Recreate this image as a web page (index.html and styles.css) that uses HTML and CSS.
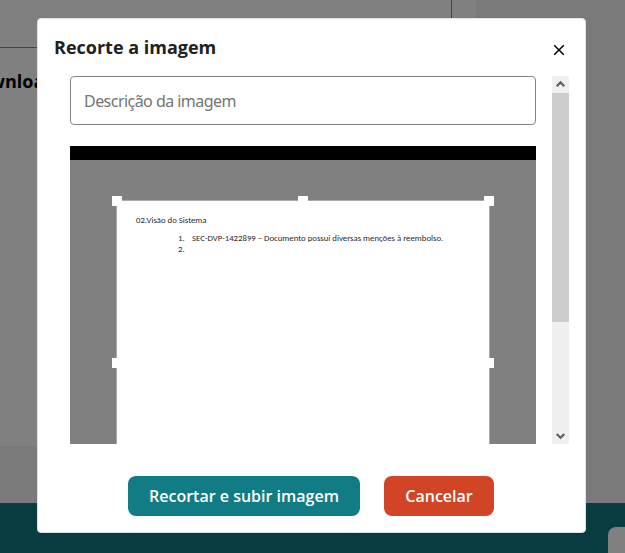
FILE: index.html
```html
<!DOCTYPE html>
<html lang="pt-BR">
<head>
<meta charset="utf-8">
<title>Recorte a imagem</title>
<link rel="stylesheet" href="styles.css">
</head>
<body>
<div class="page">
  <main class="main">
    <section class="content">
      <div class="box"></div>
      <h2 class="heading">wnload</h2>
    </section>
  </main>
  <footer class="footer"><div class="widget"></div></footer>
</div>
<div class="modal">
  <header class="header">
    <h1 class="title"><span>Recorte a imagem</span></h1>
    <svg class="close" width="12" height="12" viewBox="0 0 12 12"><path d="M1.2 1.2 10.8 10.8M10.8 1.2 1.2 10.8"/></svg>
  </header>
  <div class="body">
    <div class="scroll-content">
      <div class="field"><span class="placeholder">Descrição da imagem</span></div>
      <div class="cropper">
        <div class="selection">
          <p class="doc-title"><span class="t1">02.Visão do Sistema</span></p>
          <div class="doc-row"><span class="num">1.</span><span class="t2">SEC-DVP-1422899 – Documento possui diversas menções à reembolso.</span></div>
          <div class="doc-row"><span class="num">2.</span></div>
          <i class="handle nw"></i><i class="handle n"></i><i class="handle ne"></i>
          <i class="handle w"></i><i class="handle e"></i>
        </div>
      </div>
    </div>
    <div class="scrollbar">
      <svg class="arrow" width="17" height="17" viewBox="0 0 17 17"><path d="M4.7 10.2 8.5 6.4 12.3 10.2"/></svg>
      <div class="thumb"></div>
      <svg class="arrow" width="17" height="17" viewBox="0 0 17 17"><path d="M4.7 7 8.5 10.8 12.3 7"/></svg>
    </div>
  </div>
  <div class="actions">
    <button class="btn primary"><span>Recortar e subir imagem</span></button>
    <button class="btn danger"><span>Cancelar</span></button>
  </div>
</div>
</body>
</html>
```
FILE: styles.css
```css
* { box-sizing: border-box; margin: 0; }
body { width: 625px; height: 553px; overflow: hidden; font-family: "Open Sans", "Noto Sans", sans-serif; }
.page { height: 553px; display: flex; flex-direction: column; }
.main { height: 503px; background: #7a7a7a; }
.content { width: 476px; height: 446px; background: #808080; }
.box { width: 452px; height: 48px; border: solid #454545; border-width: 0 1px 1px 0; }
.heading { margin: 20px 0 0 -10.5px; font-size: 18px; line-height: 26px; font-weight: 700; color: #000; }
.footer { flex: 1; background: #083c40; display: flex; justify-content: flex-end; align-items: flex-end; }
.widget { width: 17px; height: 26px; background: #808080; border-radius: 8px 0 0 0; }
.modal { position: absolute; left: 37px; top: 18px; width: 549px; height: 515px; padding: 0 16px; background: #fff; border: 1px solid #dee2ea; border-radius: 4px; }
.header { height: 57px; display: flex; justify-content: space-between; align-items: flex-start; padding: 15px 4px 0 0; }
.title { font-size: 18px; line-height: 26px; font-weight: 700; color: #212121; white-space: nowrap; }
.close { margin-top: 10px; fill: none; stroke: #000; stroke-width: 1.5; }
.body { height: 368px; display: flex; justify-content: space-between; }
.scroll-content { width: 466px; margin-left: 16px; overflow: hidden; }
.field { height: 49px; border: 1px solid #858585; border-radius: 4px; padding: 0 13px; display: flex; align-items: center; font-family: "Noto Sans", sans-serif; font-size: 16px; letter-spacing: -0.54px; color: #757575; }
.placeholder { white-space: nowrap; }
.cropper { margin-top: 21px; height: 298px; border-top: 14px solid #000; background: #808080; padding: 40px 46px 0; }
.selection { position: relative; width: 374px; height: 326px; padding: 14px 19px; background: #fff; border: 1px solid #aaa; color: #292929; font: 8.75px/11px Carlito, "Noto Sans", sans-serif; white-space: nowrap; }
.doc-title { font-size: inherit; margin-bottom: 7px; }
.doc-row { display: flex; margin-left: 42px; height: 11px; }
.num { width: 14px; }
.handle { position: absolute; width: 10px; height: 10px; background: #fff; }
.nw, .w { left: -5px; }
.n { left: 181px; }
.ne, .e { right: -5px; }
.nw, .n, .ne { top: -5px; }
.w, .e { top: 157px; }
.scrollbar { width: 17px; background: #f0f0f0; display: flex; flex-direction: column; }
.thumb { height: 229px; background: #cdcdcd; margin-bottom: auto; }
.arrow { display: block; fill: none; stroke: #606060; stroke-width: 2.2; }
.actions { display: flex; margin-left: 74px; gap: 24px; margin-top: 32px; }
.btn { height: 40px; border: 0; border-radius: 8px; padding: 0; color: #fff; font: 600 16px/24px "Open Sans", "Noto Sans", sans-serif; white-space: nowrap; }
.primary { width: 232px; background: #127c84; }
.danger { width: 110px; background: #d14526; }
```
